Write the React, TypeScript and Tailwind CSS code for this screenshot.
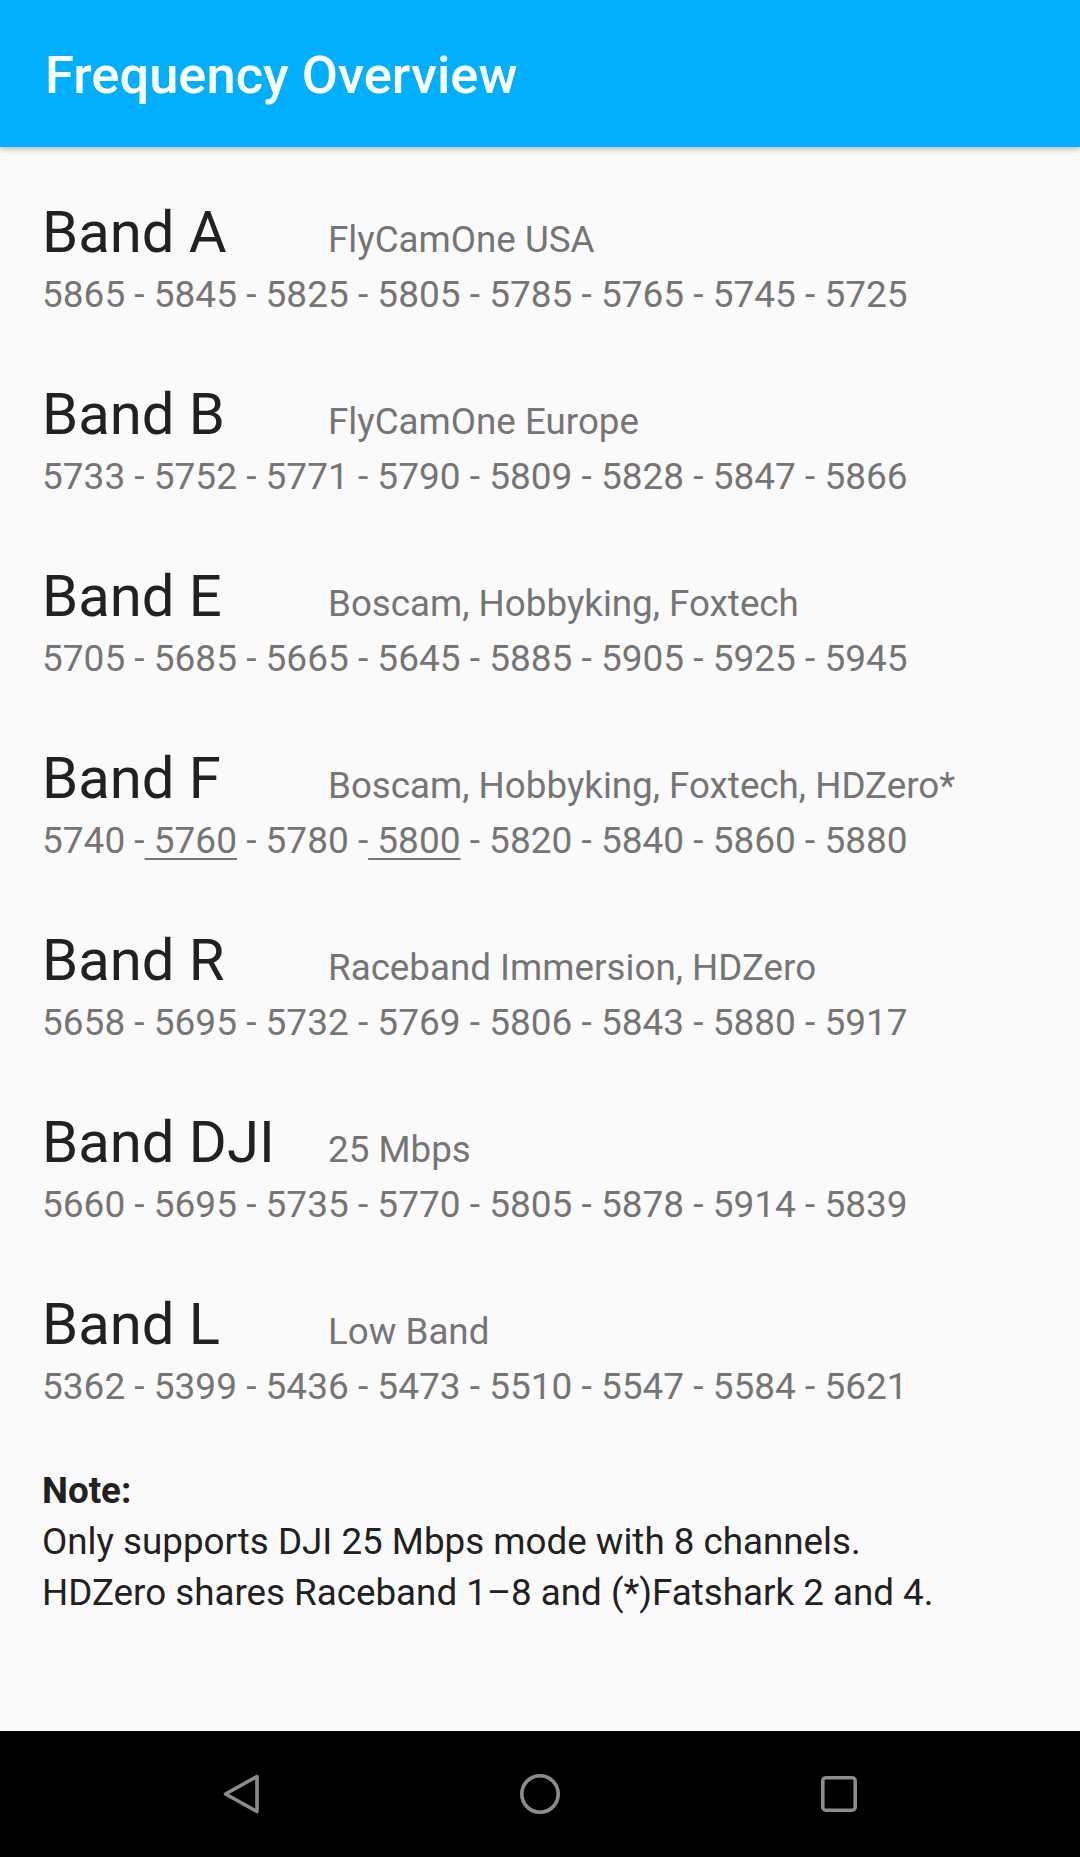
import React from "react";

type Band = { name: string; sub: string; freqs: string[]; underline?: number[] };

const bands: Band[] = [
  { name: "Band A", sub: "FlyCamOne USA", freqs: ["5865", "5845", "5825", "5805", "5785", "5765", "5745", "5725"] },
  { name: "Band B", sub: "FlyCamOne Europe", freqs: ["5733", "5752", "5771", "5790", "5809", "5828", "5847", "5866"] },
  { name: "Band E", sub: "Boscam, Hobbyking, Foxtech", freqs: ["5705", "5685", "5665", "5645", "5885", "5905", "5925", "5945"] },
  { name: "Band F", sub: "Boscam, Hobbyking, Foxtech, HDZero*", freqs: ["5740", "5760", "5780", "5800", "5820", "5840", "5860", "5880"], underline: [1, 3] },
  { name: "Band R", sub: "Raceband Immersion, HDZero", freqs: ["5658", "5695", "5732", "5769", "5806", "5843", "5880", "5917"] },
  { name: "Band DJI", sub: "25 Mbps", freqs: ["5660", "5695", "5735", "5770", "5805", "5878", "5914", "5839"] },
  { name: "Band L", sub: "Low Band", freqs: ["5362", "5399", "5436", "5473", "5510", "5547", "5584", "5621"] },
];

function Freqs({ band }: { band: Band }) {
  const parts: React.ReactNode[] = [];
  band.freqs.forEach((f, i) => {
    const u = band.underline?.includes(i);
    if (i > 0) parts.push(<span key={"s" + i}>{u ? " -" : " - "}</span>);
    if (u) {
      parts.push(
        <span key={"f" + i} className="underline decoration-[2px] underline-offset-[5px]">
          {" " + f}
        </span>
      );
    } else {
      parts.push(<span key={"f" + i}>{f}</span>);
    }
  });
  return <div className="mt-[4px] text-[37px] leading-[43px] text-[#757575] whitespace-pre">{parts}</div>;
}

export default function App() {
  return (
    <div
      className="flex min-h-[1857px] w-[1080px] flex-col bg-[#fafafa]"
      style={{ fontFamily: "Roboto, 'Noto Sans', sans-serif" }}
    >
      <header className="relative z-10 h-[147px] bg-[#00b0ff] px-[45px] pt-[45px] shadow-[0_2px_6px_rgba(0,0,0,0.28)]">
        <h1 className="text-[52.5px] font-medium leading-[61px] text-white">Frequency Overview</h1>
      </header>

      <main className="flex flex-1 flex-col gap-[61px] px-[42px] pt-[48px]">
        {bands.map((b) => (
          <div key={b.name} className="flex flex-col">
            <div className="flex items-baseline">
              <div className="w-[286px] shrink-0 text-[58px] leading-[74px] text-[#212121]">{b.name}</div>
              <div className="text-[36.75px] text-[#757575]">{b.sub}</div>
            </div>
            <Freqs band={b} />
          </div>
        ))}
        <div className="mt-[-4px] text-[36.75px] leading-[51px] text-[#212121]">
          <div className="font-bold">Note:</div>
          <div>Only supports DJI 25 Mbps mode with 8 channels.</div>
          <div>HDZero shares Raceband 1–8 and (*)Fatshark 2 and 4.</div>
        </div>
      </main>

      <nav className="flex h-[126px] items-center justify-center bg-black">
        <div className="flex w-[299px] items-center justify-center">
          <svg width="40" height="42" viewBox="0 0 40 42" fill="none">
            <path d="M36 3.5 L4.5 21 L36 38.5 Z" stroke="#8c8c8c" strokeWidth="3.6" strokeLinejoin="round" />
          </svg>
        </div>
        <div className="flex w-[299px] items-center justify-center">
          <svg width="42" height="42" viewBox="0 0 42 42" fill="none">
            <circle cx="21" cy="21" r="18.2" stroke="#8c8c8c" strokeWidth="3.6" />
          </svg>
        </div>
        <div className="flex w-[299px] items-center justify-center">
          <svg width="36" height="36" viewBox="0 0 36 36" fill="none">
            <rect x="1.8" y="1.8" width="32.4" height="32.4" rx="3" stroke="#8c8c8c" strokeWidth="3.6" />
          </svg>
        </div>
      </nav>
    </div>
  );
}
